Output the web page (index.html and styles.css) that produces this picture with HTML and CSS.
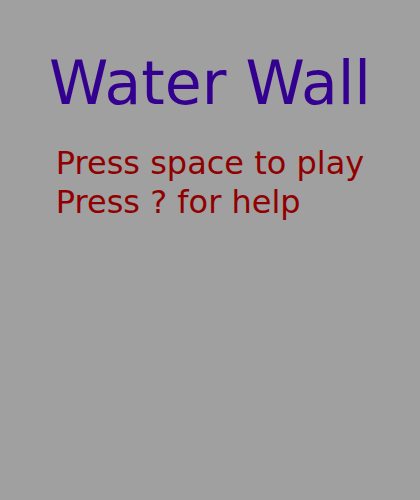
FILE: index.html
```html
<!DOCTYPE html>
<html>
<head>
<meta charset="utf-8">
<link rel="stylesheet" href="styles.css">
</head>
<body>
<div class="screen">
  <h1 class="title">Water Wall</h1>
  <div class="info">
    <div class="line">Press space to play</div>
    <div class="line">Press ? for help</div>
  </div>
</div>
</body>
</html>
```
FILE: styles.css
```css
html, body {
  margin: 0;
  padding: 0;
  background: #a0a0a0;
}
.screen {
  width: 420px;
  height: 500px;
  display: flex;
  flex-direction: column;
  align-items: center;
  font-family: "DejaVu Sans", sans-serif;
}
.title {
  margin: 48px 0 0 0;
  font-size: 60px;
  font-weight: normal;
  line-height: 70px;
  color: #330090;
}
.info {
  margin-top: 26px;
  font-size: 32px;
  line-height: 39px;
  color: #900000;
}
```
